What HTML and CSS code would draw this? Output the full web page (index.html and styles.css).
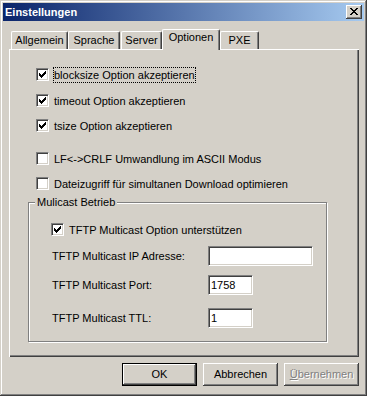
FILE: index.html
```html
<!DOCTYPE html>
<html>
<head>
<meta charset="utf-8">
<link rel="stylesheet" href="styles.css">
</head>
<body>
<div class="window">
  <div class="titlebar">
    <span class="title">Einstellungen</span>
    <div class="close">
      <svg width="8" height="7" viewBox="0 0 8 7" shape-rendering="crispEdges">
        <path fill="#000" d="M0 0h2v1H0zM6 0h2v1H6zM1 1h2v1H1zM5 1h2v1H5zM2 2h4v1H2zM3 3h2v1H3zM2 4h4v1H2zM1 5h2v1H1zM5 5h2v1H5zM0 6h2v1H0zM6 6h2v1H6z"/>
      </svg>
    </div>
  </div>
  <div class="body">
    <div class="tabs">
      <div class="tab t-allg">Allgemein</div>
      <div class="tab t-spr">Sprache</div>
      <div class="tab t-srv">Server</div>
      <div class="tab active t-opt">Optionen</div>
      <div class="tab t-pxe">PXE</div>
    </div>
    <div class="panel">
      <div class="opt"><span class="cb checked"></span><span class="lbl focus">blocksize Option akzeptieren</span></div>
      <div class="opt g13"><span class="cb checked"></span><span class="lbl">timeout Option akzeptieren</span></div>
      <div class="opt g12"><span class="cb checked"></span><span class="lbl">tsize Option akzeptieren</span></div>
      <div class="opt g20"><span class="cb"></span><span class="lbl">LF&lt;-&gt;CRLF Umwandlung im ASCII Modus</span></div>
      <div class="opt g12"><span class="cb"></span><span class="lbl">Dateizugriff für simultanen Download optimieren</span></div>
      <div class="group">
        <div class="legend">Mulicast Betrieb</div>
        <div class="gopt"><span class="cb checked"></span><span class="lbl">TFTP Multicast Option unterstützen</span></div>
        <div class="frow f-ip"><span class="flabel">TFTP Multicast IP Adresse:</span><div class="field wide"></div></div>
        <div class="frow f-port"><span class="flabel">TFTP Multicast Port:</span><div class="field narrow">1758</div></div>
        <div class="frow f-ttl"><span class="flabel">TFTP Multicast TTL:</span><div class="field narrow">1</div></div>
      </div>
    </div>
    <div class="buttons">
      <div class="btn default">OK</div>
      <div class="btn">Abbrechen</div>
      <div class="btn disabled"><u>Ü</u>bernehmen</div>
    </div>
  </div>
</div>
</body>
</html>
```

FILE: styles.css
```css
html, body {
  margin: 0;
  padding: 0;
  background: #D4D0C8;
}

.window {
  width: 367px;
  height: 396px;
  box-sizing: border-box;
  padding: 3px;
  background: #D4D0C8;
  box-shadow: inset -1px -1px #404040, inset 1px 1px #D4D0C8, inset -2px -2px #808080, inset 2px 2px #fff;
  font-family: "Liberation Sans", Arial, sans-serif;
  font-size: 11px;
  color: #000;
}

.titlebar {
  height: 18px;
  display: flex;
  align-items: center;
  justify-content: space-between;
  background: linear-gradient(to right, #0A246A, #A6CAF0);
  padding-left: 2px;
}

.title {
  color: #fff;
  font-weight: bold;
  font-size: 11px;
  line-height: 18px;
}

.close {
  width: 16px;
  height: 14px;
  margin-right: 2px;
  box-sizing: border-box;
  background: #D4D0C8;
  box-shadow: inset -1px -1px #404040, inset 1px 1px #fff, inset -2px -2px #808080;
  display: flex;
  align-items: center;
  justify-content: center;
}

.close svg {
  display: block;
  margin: 0 1px 1px 0;
}

.body {
  padding: 8px 5px 0 6px;
}

.tabs {
  display: flex;
  align-items: flex-end;
  height: 20px;
  padding-left: 2px;
  position: relative;
  z-index: 1;
}

.tab {
  height: 18px;
  box-sizing: border-box;
  border-left: 1px solid #fff;
  border-top: 1px solid #fff;
  border-right: 1px solid #404040;
  border-radius: 2px 2px 0 0;
  box-shadow: inset -1px 0 #808080;
  text-align: center;
  line-height: 17px;
  background: #D4D0C8;
}

.t-allg { width: 57px; }
.t-spr { width: 52px; }
.t-srv { width: 41px; margin-left: 1px; }
.t-opt { width: 58px; }
.t-pxe { width: 39px; }

.tab.active {
  height: 21px;
  margin-bottom: -1px;
  line-height: 14px;
}

.panel {
  height: 308px;
  box-sizing: border-box;
  box-shadow: inset 1px 1px #fff, inset -1px -1px #404040, inset -2px -2px #808080;
  padding: 19px 0 0 19px;
}

.opt {
  display: flex;
  align-items: center;
  height: 13px;
  margin-left: 8px;
}

.g12 { margin-top: 12px; }
.g13 { margin-top: 13px; }
.g20 { margin-top: 20px; }

.cb {
  width: 13px;
  height: 13px;
  flex: none;
  box-sizing: border-box;
  background: #fff;
  border: 1px solid;
  border-color: #808080 #fff #fff #808080;
  box-shadow: inset 1px 1px #404040, inset -1px -1px #D4D0C8;
}

.cb.checked {
  background-color: #fff;
  background-image:
    linear-gradient(#000, #000), linear-gradient(#000, #000), linear-gradient(#000, #000),
    linear-gradient(#000, #000), linear-gradient(#000, #000), linear-gradient(#000, #000),
    linear-gradient(#000, #000);
  background-repeat: no-repeat;
  background-size: 1px 3px, 1px 3px, 1px 3px, 1px 3px, 1px 3px, 1px 3px, 1px 3px;
  background-position: 2px 4px, 3px 5px, 4px 6px, 5px 5px, 6px 4px, 7px 3px, 8px 2px;
}

.lbl {
  margin-left: 4px;
  border: 1px solid transparent;
  line-height: 14px;
  white-space: nowrap;
}

.lbl.focus {
  border: 1px dotted #000;
}

.group {
  margin-top: 12px;
  width: 299px;
  height: 140px;
  box-sizing: border-box;
  border: 1px solid #808080;
  box-shadow: inset 1px 1px #fff, 1px 1px #fff;
}

.legend {
  display: block;
  width: max-content;
  margin: -8px 0 0 6px;
  padding: 0 2px;
  line-height: 14px;
  background: #D4D0C8;
}

.gopt {
  display: flex;
  align-items: center;
  height: 13px;
  margin: 14px 0 0 22px;
}

.frow {
  display: flex;
  align-items: center;
  height: 20px;
  margin-left: 23px;
}

.f-ip { margin-top: 10px; }
.f-port { margin-top: 9px; }
.f-ttl { margin-top: 13px; }

.flabel {
  width: 156px;
  flex: none;
  white-space: nowrap;
}

.field {
  height: 20px;
  box-sizing: border-box;
  background: #fff;
  border: 1px solid;
  border-color: #808080 #fff #fff #808080;
  box-shadow: inset 1px 1px #404040, inset -1px -1px #D4D0C8;
  padding-left: 2px;
  line-height: 18px;
}

.field.wide { width: 105px; }
.field.narrow { width: 45px; }

.buttons {
  display: flex;
  justify-content: flex-end;
  gap: 6px;
  margin-top: 6px;
}

.btn {
  width: 75px;
  height: 23px;
  box-sizing: border-box;
  background: #D4D0C8;
  box-shadow: inset -1px -1px #404040, inset 1px 1px #fff, inset -2px -2px #808080;
  text-align: center;
  line-height: 23px;
}

.btn.default {
  border: 1px solid #000;
  line-height: 21px;
}

.btn.disabled {
  color: #808080;
  text-shadow: 1px 1px #fff;
}
```
